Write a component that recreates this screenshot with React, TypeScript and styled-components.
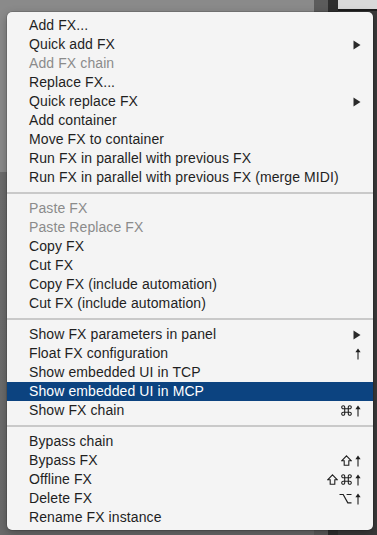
import React from "react";
import styled, { createGlobalStyle } from "styled-components";

const GlobalStyle = createGlobalStyle`
  html, body { margin: 0; padding: 0; }
  body {
    width: 377px;
    height: 535px;
    overflow: hidden;
    font-family: "Liberation Sans", "DejaVu Sans", sans-serif;
  }
`;

const Screen = styled.div`
  position: relative;
  width: 377px;
  height: 535px;
  box-sizing: border-box;
  padding: 12px 4px 0 7px;
  background:
    linear-gradient(to bottom, #8a8a8a 0, #8a8a8a 172px, #6d6d6d 172px, #6a6a6a 100%) 0 0 / 314px 100% no-repeat,
    linear-gradient(to right, #5c5c5c 0, #5c5c5c 14px, #2f2f2f 14px, #2f2f2f 24px, #3a3a3a 24px) 314px 0 / 63px 100% no-repeat;
`;

const TopPanel = styled.div`
  position: absolute;
  top: 0;
  left: 338px;
  width: 39px;
  height: 9px;
  background: #d9d9d9;
  border-bottom: 2px solid #1c1c1c;
`;

const Menu = styled.div`
  position: relative;
  width: 366px;
  box-sizing: border-box;
  padding: 4px 0 3px;
  background: #f4f4f4;
  border-radius: 5px;
  box-shadow: 0 0 0 0.5px rgba(0, 0, 0, 0.25), 0 3px 10px rgba(0, 0, 0, 0.3);
`;

const Item = styled.div<{ $disabled?: boolean; $active?: boolean }>`
  display: flex;
  align-items: center;
  height: 19px;
  padding: 0 12px 0 22px;
  font-size: 14px;
  line-height: 19px;
  letter-spacing: 0.1px;
  white-space: nowrap;
  color: ${(p) => (p.$active ? "#ffffff" : p.$disabled ? "#8b8b8b" : "#1f1f1f")};
  background: ${(p) => (p.$active ? "#0c4380" : "transparent")};
`;

const Label = styled.span`
  flex: 1;
`;

const Shortcut = styled.span`
  display: flex;
  align-items: center;
  gap: 3px;
  color: #1f1f1f;
`;

const Sep = styled.div`
  height: 2px;
  margin: 5px 0;
  background: #c9c9c9;
`;

const Arrow = () => (
  <svg width="8" height="10" viewBox="0 0 8 10">
    <polygon points="0.5,0.5 7.5,5 0.5,9.5" fill="#2a2a2a" />
  </svg>
);

const Up = () => (
  <svg width="6" height="12" viewBox="0 0 6 12">
    <polygon points="3,0.5 5.6,4.2 0.4,4.2" fill="#1f1f1f" />
    <line x1="3" y1="3.5" x2="3" y2="11.5" stroke="#1f1f1f" strokeWidth="1.1" />
  </svg>
);

const Shift = () => (
  <svg width="11" height="11" viewBox="0 0 11 11">
    <polygon
      points="5.5,0.9 10.3,5.8 7.8,5.8 7.8,10.2 3.2,10.2 3.2,5.8 0.7,5.8"
      fill="none"
      stroke="#1f1f1f"
      strokeWidth="1.1"
      strokeLinejoin="miter"
    />
  </svg>
);

const Cmd = () => (
  <svg width="11" height="11" viewBox="0 0 11 11">
    <path
      d="M3.7 3.7 V2.3 A1.5 1.5 0 1 0 2.3 3.7 H8.7 A1.5 1.5 0 1 0 7.3 2.3 V8.7 A1.5 1.5 0 1 0 8.7 7.3 H2.3 A1.5 1.5 0 1 0 3.7 8.7 Z"
      fill="none"
      stroke="#1f1f1f"
      strokeWidth="1.1"
    />
  </svg>
);

const Opt = () => (
  <svg width="13" height="11" viewBox="0 0 13 11">
    <path d="M0.5 1.5 H4.2 L8.8 9.8 H12.5 M7.6 1.5 H12.5" fill="none" stroke="#1f1f1f" strokeWidth="1.2" />
  </svg>
);

const keyIcons: Record<string, () => React.ReactElement> = {
  shift: Shift,
  cmd: Cmd,
  opt: Opt,
  click: Up,
};

type Entry =
  | { sep: true }
  | { label: string; disabled?: boolean; sub?: boolean; keys?: string[]; active?: boolean; sep?: false };

const entries: Entry[] = [
  { label: "Add FX..." },
  { label: "Quick add FX", sub: true },
  { label: "Add FX chain", disabled: true },
  { label: "Replace FX..." },
  { label: "Quick replace FX", sub: true },
  { label: "Add container" },
  { label: "Move FX to container" },
  { label: "Run FX in parallel with previous FX" },
  { label: "Run FX in parallel with previous FX (merge MIDI)" },
  { sep: true },
  { label: "Paste FX", disabled: true },
  { label: "Paste Replace FX", disabled: true },
  { label: "Copy FX" },
  { label: "Cut FX" },
  { label: "Copy FX (include automation)" },
  { label: "Cut FX (include automation)" },
  { sep: true },
  { label: "Show FX parameters in panel", sub: true },
  { label: "Float FX configuration", keys: ["click"] },
  { label: "Show embedded UI in TCP" },
  { label: "Show embedded UI in MCP", active: true },
  { label: "Show FX chain", keys: ["cmd", "click"] },
  { sep: true },
  { label: "Bypass chain" },
  { label: "Bypass FX", keys: ["shift", "click"] },
  { label: "Offline FX", keys: ["shift", "cmd", "click"] },
  { label: "Delete FX", keys: ["opt", "click"] },
  { label: "Rename FX instance" },
];

export default function App() {
  return (
    <>
      <GlobalStyle />
      <Screen>
        <TopPanel />
        <Menu>
          {entries.map((e, i) =>
            e.sep ? (
              <Sep key={i} />
            ) : (
              <Item key={i} $disabled={e.disabled} $active={e.active}>
                <Label>{e.label}</Label>
                {e.sub && <Arrow />}
                {e.keys && (
                  <Shortcut>
                    {e.keys.map((k, j) => {
                      const Icon = keyIcons[k];
                      return <Icon key={j} />;
                    })}
                  </Shortcut>
                )}
              </Item>
            )
          )}
        </Menu>
      </Screen>
    </>
  );
}
